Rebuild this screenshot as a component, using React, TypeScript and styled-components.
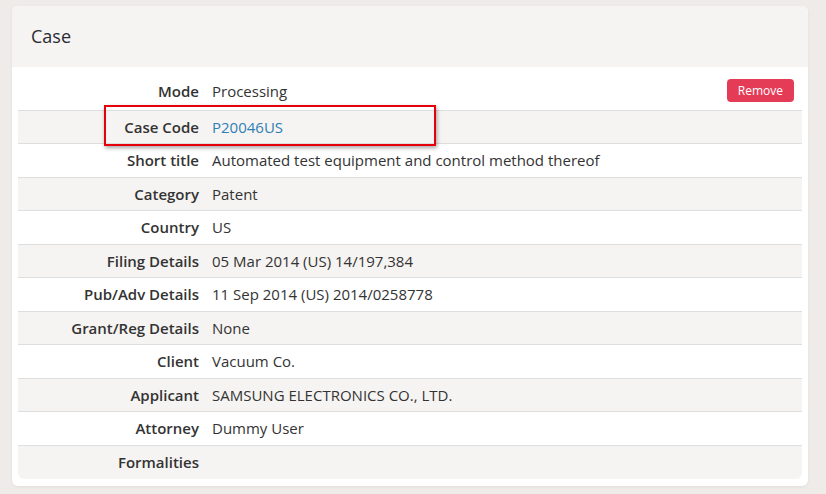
import React from "react";
import styled, { createGlobalStyle } from "styled-components";

const GlobalStyle = createGlobalStyle`
  html, body {
    margin: 0;
    padding: 0;
    background: #efebe8;
    font-family: "Open Sans", "Liberation Sans", sans-serif;
    color: #333;
  }
`;

const Page = styled.div`
  padding: 6px 18px 8px 12px;
`;

const Card = styled.div`
  position: relative;
  background: #fff;
  border-radius: 6px;
  box-shadow: 0 1px 3px rgba(0, 0, 0, 0.06);
  overflow: hidden;
  padding-bottom: 7px;
`;

const Header = styled.div`
  background: #f6f4f2;
  height: 61px;
  box-sizing: border-box;
  padding: 0 0 2px 19px;
  display: flex;
  align-items: center;
  font-size: 18px;
  color: #2a2a33;
`;

const Table = styled.div`
  margin: 10px 6px 0;
  border-radius: 0 0 6px 6px;
  overflow: hidden;
`;

const Row = styled.div<{ $striped?: boolean; $last?: boolean; $first?: boolean }>`
  display: grid;
  grid-template-columns: 189px 1fr auto;
  align-items: center;
  height: 33.5px;
  box-sizing: border-box;
  padding-bottom: ${(p) => (p.$first ? "5px" : "0")};
  background: ${(p) => (p.$striped ? "#f6f4f2" : "#fff")};
  border-bottom: ${(p) => (p.$last ? "none" : "1px solid #dedede")};
  font-size: 15px;
`;

const Label = styled.div`
  text-align: right;
  font-weight: 600;
  padding-right: 8px;
  color: #333;
`;

const Value = styled.div<{ $link?: boolean }>`
  padding-left: 5px;
  color: ${(p) => (p.$link ? "#2f7fb5" : "#333")};
`;

const RemoveButton = styled.button`
  background: #e43b57;
  color: #fff;
  border: none;
  border-radius: 4px;
  font-family: inherit;
  font-size: 12px;
  height: 23px;
  padding: 0 11px;
  margin-right: 8px;
  cursor: pointer;
`;

const Highlight = styled.div`
  position: absolute;
  left: 92px;
  top: 99px;
  width: 328px;
  height: 37px;
  border: 2px solid #e6000b;
  box-shadow: 1px 2px 4px rgba(0, 0, 0, 0.35);
  pointer-events: none;
`;

const rows: { label: string; value: string; link?: boolean }[] = [
  { label: "Mode", value: "Processing" },
  { label: "Case Code", value: "P20046US", link: true },
  { label: "Short title", value: "Automated test equipment and control method thereof" },
  { label: "Category", value: "Patent" },
  { label: "Country", value: "US" },
  { label: "Filing Details", value: "05 Mar 2014 (US) 14/197,384" },
  { label: "Pub/Adv Details", value: "11 Sep 2014 (US) 2014/0258778" },
  { label: "Grant/Reg Details", value: "None" },
  { label: "Client", value: "Vacuum Co." },
  { label: "Applicant", value: "SAMSUNG ELECTRONICS CO., LTD." },
  { label: "Attorney", value: "Dummy User" },
  { label: "Formalities", value: "" },
];

export default function App() {
  return (
    <Page>
      <GlobalStyle />
      <Card>
        <Header>Case</Header>
        <Table>
          {rows.map((r, i) => (
            <Row
              key={r.label}
              $first={i === 0}
              $striped={i % 2 === 1}
              $last={i === rows.length - 1}
            >
              <Label>{r.label}</Label>
              <Value $link={r.link}>{r.value}</Value>
              {i === 0 ? <RemoveButton>Remove</RemoveButton> : <span />}
            </Row>
          ))}
        </Table>
        <Highlight />
      </Card>
    </Page>
  );
}
